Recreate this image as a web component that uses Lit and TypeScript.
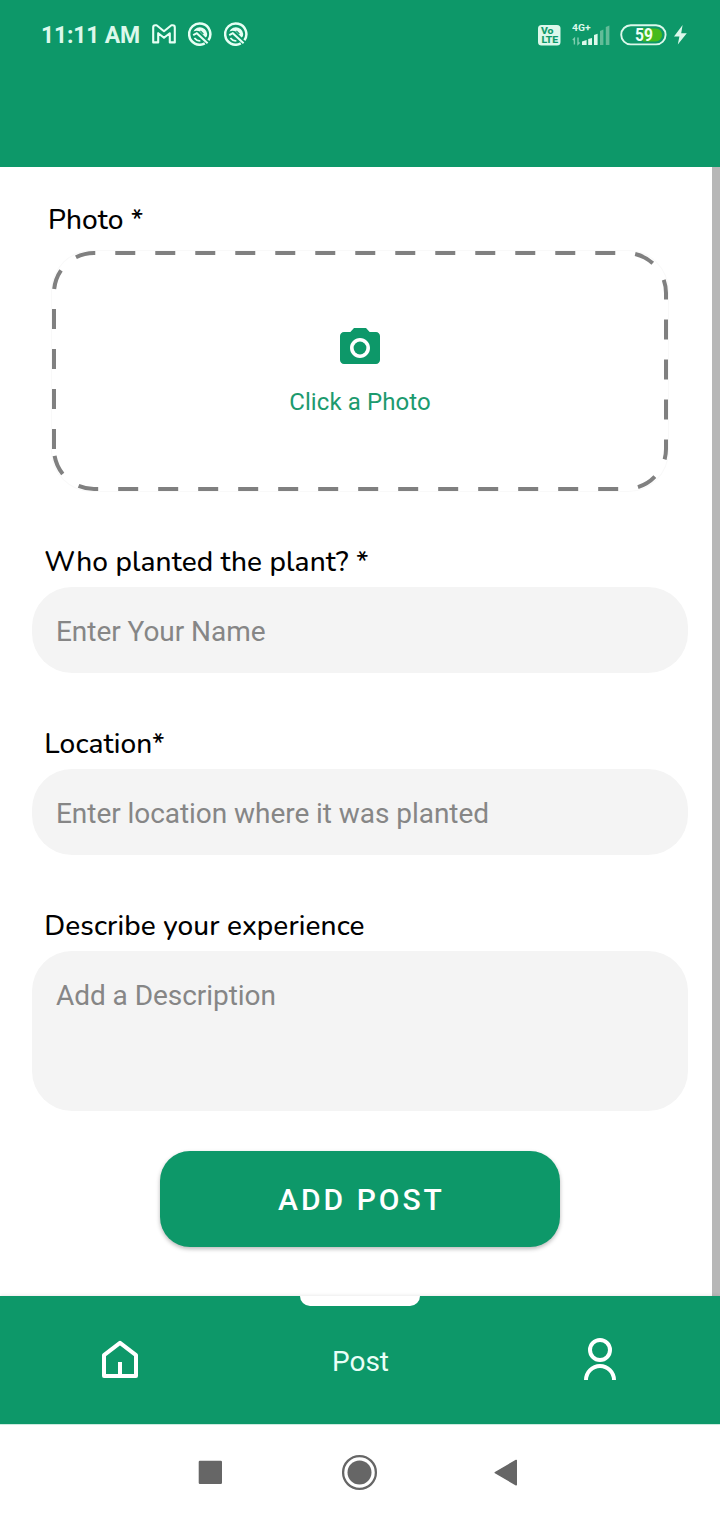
import { LitElement, html, css } from "lit";
import { customElement, property } from "lit/decorators.js";

const rotationBadge = html`<svg class="badge" width="24" height="24" viewBox="0 0 24 24" fill="none" stroke="#e6fff4">
  <path d="M20.4 18.2A10.6 10.6 0 1 0 16.8 21.4" stroke-width="2.5"/>
  <path d="M5.4 9.4A7.2 7.2 0 0 1 18.9 14.2L17.6 15.4L11.4 9.2Q8.4 8 5.4 9.4Z" fill="#e6fff4" stroke="none"/>
  <path d="M12.4 8.8L15.4 12" stroke="#0e9869" stroke-width="1.2"/>
  <path d="M5.2 13.2L8.8 11.2L19.6 21.2" stroke-width="2.1"/>
  <path d="M6.4 16Q8.6 18.8 12.4 19" stroke-width="1.7"/>
</svg>`;

@customElement("status-bar")
export class StatusBar extends LitElement {
  static styles = css`
    :host { display: flex; align-items: flex-start; height: 167px; box-sizing: border-box; padding: 20px 33px 0 41px; background: #0d9869; color: #dcf8eb; font-family: Roboto, sans-serif; }
    .time { font-size: 23px; line-height: 30px; font-weight: 700; width: 111px; margin-top: 1px; white-space: nowrap; letter-spacing: -0.2px; }
    .mail { margin-top: 4px; }
    .badge { margin: 2px 0 0 12px; }
    .spacer { flex: 1; }
    .volte { margin-top: 5px; }
    .signal { margin: 1px 0 0 11px; }
    .battery { margin: 4px 0 0 10px; }
    .bolt { margin: 5px 0 0 7px; }
    svg { display: block; flex: none; }
    text { font-family: Roboto, sans-serif; font-weight: 700; }
  `;
  render() {
    return html`
      <div class="time">11:11 AM</div>
      <svg class="mail" width="24" height="20" viewBox="0 0 24 20" fill="none" stroke="#e6fff4" stroke-width="2.1" stroke-linejoin="round">
        <path d="M1.2 3.4Q1.2 1.2 3.2 1.2H4.6L12 7.2L19.4 1.2H20.8Q22.8 1.2 22.8 3.4V18.4H17.8V9.2L12 13.8L6.2 9.2V18.4H1.2Z"/>
      </svg>
      ${rotationBadge}${rotationBadge}
      <div class="spacer"></div>
      <svg class="volte" width="23" height="21" viewBox="0 0 23 21">
        <rect width="22.5" height="20.5" rx="3.5" fill="#dcf8eb"/>
        <g fill="#0d9869" stroke="#0d9869" stroke-width="0.15" font-size="9.5">
          <text x="3" y="9.4" textLength="12.5" lengthAdjust="spacingAndGlyphs">Vo</text>
          <text x="3.4" y="18.2" textLength="16.8" lengthAdjust="spacingAndGlyphs">LTE</text>
        </g>
      </svg>
      <svg class="signal" width="38" height="25" viewBox="0 0 38 25">
        <text x="0" y="9.8" font-size="9.8" fill="#dcf8eb" textLength="18.5" lengthAdjust="spacingAndGlyphs">4G+</text>
        <g fill="none" stroke="#80cdb0" stroke-width="1.4"><path d="M2.4 23.6V17.4L.8 19M6 16.6V23L7.6 21.4"/></g>
        <g fill="#dcf8eb"><path d="M10 20.4L14.6 19V24H10ZM16.2 18L20 17V24H16.2ZM22 14L25.6 12.8V24H22Z"/></g>
        <g fill="#62bc98"><path d="M28 10L31.4 8.6V24H28ZM33.8 6L37.4 4.6V24H33.8Z"/></g>
      </svg>
      <svg class="battery" width="47" height="22" viewBox="0 0 47 22">
        <rect x="1.2" y="1.2" width="44.4" height="19.2" rx="9.6" fill="none" stroke="#dcf8eb" stroke-width="1.9"/>
        <path d="M23 4.4H35.6A6.5 6.5 0 0 1 35.6 17.4H23Z" fill="#46ba1d"/>
        <text x="15" y="17" font-size="17.5" fill="#effff7" textLength="18" lengthAdjust="spacingAndGlyphs">59</text>
      </svg>
      <svg class="bolt" width="13" height="20" viewBox="0 0 13 20"><path d="M8.6 0L0 11.4H5.4L3.8 19.6L12.8 8.2H7.2Z" fill="#dcf8eb"/></svg>
    `;
  }
}

@customElement("form-field")
export class FormField extends LitElement {
  @property() label = "";
  @property() hint = "";
  @property({ type: Boolean, reflect: true }) tall = false;
  static styles = css`
    :host { display: block; }
    .label { height: 40px; padding-left: 12.3px; font: 500 28px/40px Nunito, Lato, sans-serif; color: #000; white-space: nowrap; letter-spacing: 0.1px; }
    .box { height: 86px; margin-top: 5px; box-sizing: border-box; padding: 25px 24px 0; border-radius: 40px; background: #f4f4f4; color: #868686; font: 400 28px/40px Roboto, sans-serif; letter-spacing: -0.05px; }
    :host([tall]) .box { height: 160px; }
  `;
  render() {
    return html`<div class="label">${this.label}</div><div class="box">${this.hint}</div>`;
  }
}

@customElement("photo-picker")
export class PhotoPicker extends LitElement {
  static styles = css`
    :host { display: block; }
    .label { height: 40px; padding-left: 16px; font: 500 28px/40px Nunito, Lato, sans-serif; color: #000; letter-spacing: 0.1px; }
    .drop { display: grid; width: 616px; height: 240px; margin: 11px 20px 0; border-radius: 40px; box-shadow: 0 0 0 1px #f9f9f9; }
    .outline, .content { grid-area: 1 / 1; }
    .outline { display: block; }
    .content { display: flex; flex-direction: column; align-items: center; padding-top: 73px; }
    .caption { margin-top: 16px; font: 400 24px/28px Roboto, sans-serif; color: #1c9a6e; letter-spacing: 0.1px; }
  `;
  render() {
    return html`
      <div class="label">Photo *</div>
      <div class="drop">
        <svg class="outline" width="616" height="240" viewBox="0 0 616 240">
          <path d="M2 198V42A40 40 0 0 1 42 2H574A40 40 0 0 1 614 42V198A40 40 0 0 1 574 238H42A40 40 0 0 1 2 198" fill="none" stroke="#808080" stroke-width="4" stroke-dasharray="20 20"/>
        </svg>
        <div class="content">
          <svg width="48" height="48" viewBox="0 0 24 24" fill="#0d9869">
            <circle cx="12" cy="12" r="3.2"/>
            <path d="M9 2L7.17 4H4C2.9 4 2 4.9 2 6V18C2 19.1 2.9 20 4 20H20C21.1 20 22 19.1 22 18V6C22 4.9 21.1 4 20 4H16.83L15 2H9ZM12 17C9.24 17 7 14.76 7 12S9.24 7 12 7S17 9.24 17 12S14.76 17 12 17Z"/>
          </svg>
          <div class="caption">Click a Photo</div>
        </div>
      </div>`;
  }
}

@customElement("tab-bar")
export class TabBar extends LitElement {
  static styles = css`
    :host { display: grid; grid-template-columns: repeat(3, 240px); height: 128px; background: #0d9869; box-shadow: 0 -1px 3px rgba(0, 0, 0, 0.08); position: relative; }
    .tab { display: flex; justify-content: center; align-items: center; }
    .active { display: flex; flex-direction: column; align-items: center; }
    .marker { width: 120px; height: 10px; border-radius: 0 0 10px 10px; background: #fff; }
    .name { margin-top: 36px; padding-left: 1px; font: 400 28px/40px Roboto, sans-serif; color: #e9fff7; }
  `;
  render() {
    return html`
      <div class="tab">
        <svg width="48" height="48" viewBox="0 0 48 48" fill="none" stroke="#fff" stroke-width="4" stroke-linejoin="round">
          <path d="M8 40V19.2L24 6.8L40 19.2V40ZM24 40V26"/>
        </svg>
      </div>
      <div class="active"><div class="marker"></div><div class="name">Post</div></div>
      <div class="tab">
        <svg width="48" height="48" viewBox="0 0 48 48" fill="none" stroke="#fff" stroke-width="4">
          <circle cx="24" cy="14" r="10"/><path d="M10 44A14 14 0 0 1 38 44"/>
        </svg>
      </div>`;
  }
}

@customElement("app-root")
export class AppRoot extends LitElement {
  static styles = css`
    :host { display: flex; flex-direction: column; width: 720px; height: 1520px; background: #fff; overflow: hidden; }
    .body { display: flex; height: 1129px; }
    .form { width: 712px; box-sizing: border-box; padding: 33px 24px 0 32px; }
    .track { width: 8px; background: #b7b7b7; }
    .field { margin-top: 51px; }
    .submit { display: block; width: 400px; height: 96px; margin: 40px 0 0 128px; padding: 2px 0 0 3px; border: 0; border-radius: 30px; background: #0d9869; color: #fff; font: 500 30px/94px Roboto, sans-serif; letter-spacing: 3px; box-shadow: 0 2px 4px rgba(0, 0, 0, 0.28); }
    .system { display: block; border-top: 1px solid #cdeee2; }
  `;
  render() {
    return html`
      <status-bar></status-bar>
      <div class="body">
        <div class="form">
          <photo-picker></photo-picker>
          <form-field class="field" label="Who planted the plant? *" hint="Enter Your Name"></form-field>
          <form-field class="field" label="Location*" hint="Enter location where it was planted"></form-field>
          <form-field class="field" tall label="Describe your experience" hint="Add a Description"></form-field>
          <button class="submit">ADD POST</button>
        </div>
        <div class="track"></div>
      </div>
      <tab-bar></tab-bar>
      <svg class="system" width="720" height="95" viewBox="0 1425 720 95" fill="#666">
        <rect x="198.7" y="1460.7" width="23.3" height="23.3" rx="1.2"/>
        <circle cx="359.5" cy="1472.5" r="12"/>
        <circle cx="359.5" cy="1472.5" r="16.4" fill="none" stroke="#666" stroke-width="2.3"/>
        <path d="M495.3 1472.6L516.2 1460.5V1484.8Z" stroke="#666" stroke-width="1.6" stroke-linejoin="round"/>
      </svg>`;
  }
}
